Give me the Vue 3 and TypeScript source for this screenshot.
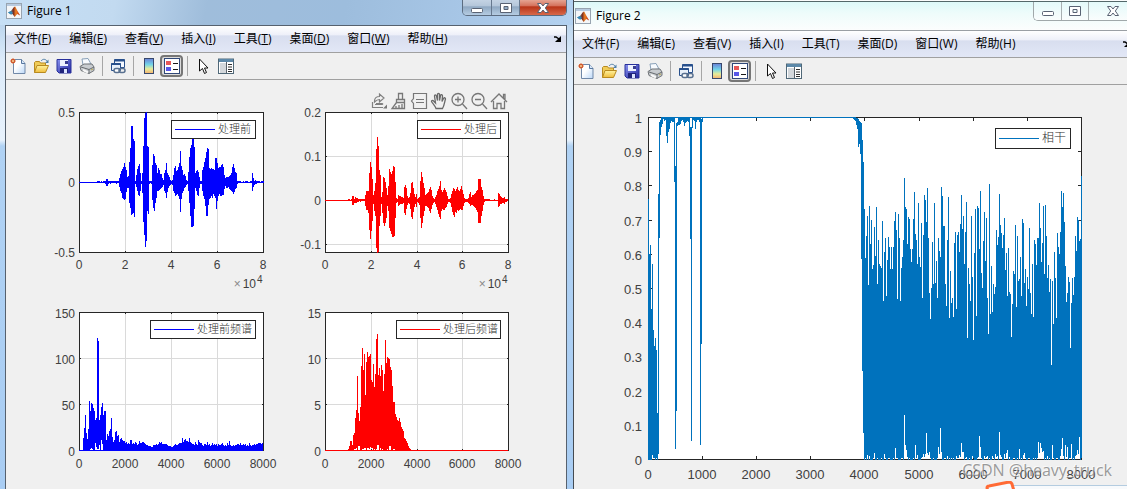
<script setup lang="ts">
interface Run { x: number; values: string }
interface Tick { at: number; label: string }
interface Axes {
  id: string
  left: number; top: number; right: number; bottom: number
  xTicks: Tick[]; yTicks: Tick[]
  grid: boolean; tickLength: number; fontSize: number
  xLabelY: number; yLabelX: number; yLabelDrop: number
  power?: boolean
  color: string
  path: string
  legend: { x: number; y: number; width: number; height: number; text: string; fontSize: number }
}
interface Figure {
  id: string; title: string; active: boolean; viewBox: string; axes: Axes[]
}

/* Signal drawn around a zero line; each value is "above/below". */
function signalPath(left: number, right: number, zero: number, runs: Run[]): string {
  let d = `M${left},${zero}H${right}V${zero + 1}H${left}z`
  for (const run of runs) {
    run.values.split(' ').forEach((pair, i) => {
      const [up, down] = pair.split('/').map(Number)
      d += `M${run.x + i},${zero - up}h1v${up + down + 1}h-1z`
    })
  }
  return d
}

/* Spectrum standing on a baseline; an optional second value is the lower edge. */
function spectrumPath(left: number, right: number, base: number, runs: Run[]): string {
  let d = `M${left},${base}H${right}V${base + 1}H${left}z`
  for (const run of runs) {
    run.values.split(' ').forEach((item, i) => {
      const [high, low = 0] = item.split('/').map(Number)
      d += `M${run.x + i},${base + 1 - high}h1v${high - low}h-1z`
    })
  }
  return d
}

const before: Run[] = [
  { x: 97, values: '1/0 1/0 1/0 0/0 1/0 0/0 1/0 1/0 1/1 3/3 3/3 1/1 1/0 1/1 1/0 1/0 1/0 1/0 1/0 1/1 1/0 1/0' },
  { x: 119, values: '4/4 8/8 11/10 13/15 15/16 19/17 15/16 12/9 5/5 6/5 20/20 34/25 56/32 56/31 43/30 41/34 1/1 7/4 13/8 16/12 18/13 9/8 1/1 9/10 36/39 64/52 69/64 70/58 36/28 35/31 1/1 1/0 1/1 17/17 28/25 26/28 19/20 17/15 9/8 14/8 12/7 8/6 8/5 4/4 2/2 9/8 12/10 19/15 9/9 7/5 5/3 2/2 1/1 2/2 7/8 14/10 16/13 11/12 12/11 15/13 19/16 31/29 16/16 12/10 7/8 8/5 6/4 2/2 1/1 10/8 25/20 34/33 37/44 43/44 43/43 35/26 9/5 11/8 12/12 10/13 5/5 1/1 1/1 12/8 15/13 20/16 24/23 30/33 34/33 33/22 14/16 13/15 14/13 13/15 13/11 12/13 24/15 24/26 19/18 14/13 15/11 15/13 17/13 18/12 15/12 7/6 4/3 5/5 5/5 5/4 6/6 7/7 9/8 15/9 18/11 14/9 10/6 9/5 1/1 1/0 1/0 1/0 0/0 0/0 1/0 0/0 1/0 1/0 1/0 0/0 0/0 1/0 1/0 9/8 4/4 1/2 2/1 1/1 1/0 1/0 1/0 0/0 1/0 1/0 1/0' },
]
const after: Run[] = [
  { x: 348, values: '1/0 1/0 0/0 1/0 4/4 4/4 1/2 3/2 2/2 2/1 1/1 1/0 1/1 1/0 1/0 1/0 1/0' },
  { x: 365, values: '5/5 9/9 9/9 9/12 27/29 38/38 33/30 21/20 5/3 9/10 17/15 51/47 63/52 54/51 30/25 25/15 3/3 8/12 23/22 22/25 18/22 12/17 5/5 14/10 31/27 28/30 26/33 29/36 34/36 33/35 18/17 2/2 1/1 5/5 4/4 4/3 3/3 3/3 2/2 13/12 15/14 12/8 4/4 2/2 3/3 7/8 17/16 18/18 12/11 6/6 3/3 6/6 1/1 2/2 3/4 19/17 28/27 23/22 17/15 12/10 5/5 6/5 7/6 8/7 11/10 13/12 10/8 4/4 2/2 1/1 3/3 5/6 9/9 11/13 14/16 19/18 10/10 8/8 10/9 12/9 10/7 8/6 4/3 1/1 1/1 2/2 6/6 9/11 12/14 11/16 9/11 11/12 13/9 10/10 9/9 11/8 14/9 10/9 6/5 2/2 1/1 1/1 1/1 2/2 6/3 8/5 3/4 5/4 5/5 6/6 7/7 9/9 10/11 21/22 21/22 21/22 13/15 10/10 4/4 1/1 1/0 1/0 1/0 1/0 1/0 0/0 0/0 0/0 0/0 1/0 0/0 0/0 0/0 7/6 6/5 4/3 3/3 2/2 2/2 3/3 1/1 1/1 1/0' },
]
const beforeSpectrum: Run[] = [
  { x: 83, values: '13 23 36 18 12 22 50 40/2 48/3 47/2 43 40 31/8 33/4 113/2 110/2 31/6 36 44/11 48/7 36 40 40 11 17 15 20 22/1 33/1 14 9 11 19 20 15 16 9 12 13 11 10 10 8 9 7 8 7 11 11 7 8 7 9 8 6 7 10 8 8 9 9 8 7 6 6 5 5 5 4 4 6 6 6 7 6 7 9 8 9 7 7 7 7 7 6 5 5 5 4 4 5 6 7 6 6 7 8 8 8 13 9 11 12 10 10 9 13 9 8 7 7 6 9 7 6 11 9 8 8 6 5 7 7 6 9 6 7 5 6 8 6 7 6 7 5 7 6 6 7 8 6 5 6 5 8 6 10 6 5 5 6 5 6 6 7 7 6 8 6 6 7 6 7 5 6 5 8 6 5 6 6 7 6 7 7 8 8 8 7 8' },
]
const afterSpectrum: Run[] = [
  { x: 348, values: '2 5 10 10 6/1 16/1 18/2 33/2 41/3 75/1 38/5 30/5 44 85/1 103/2 81/2 97/3 56/3 89/1 99/3 94/3 95/2 97/4 71/3 69/3 87 64/2 77/1 112/2 117/6 76/6 83 75/3 86 81/2 60/1 77/1 111/1 88 94/2 93/1 92/5 84/5 81/1 65 49/2 49/2 37/1 34/1 31/1 30/1 33/1 29 24/1 22 20 13 12 10 8 5 3 2' },
]

/* Coherence samples, in steps of a 0 to 1026 scale measured from the top. */
const FULL = 1026
const coherenceHead: [number, number, number][] = [
  [0, 246, 1026], [1, 411, 1026], [2, 384, 1026], [3, 576, 1026], [4, 441, 1010], [5, 639, 1020], [6, 687, 1020],
  [7, 663, 1026], [8, 699, 1020], [9, 888, 1026], [10, 231, 1007], [11, 14, 359], [12, 9, 50], [13, 3, 26], [14, 1, 18],
  [15, 0, 3], [16, 0, 9], [17, 0, 6], [18, 1, 54], [19, 4, 74], [20, 4, 42], [21, 3, 32], [22, 3, 16], [23, 0, 10],
  [24, 0, 12], [25, 2, 12], [26, 2, 191], [27, 147, 992], [28, 18, 878], [29, 16, 24], [30, 1, 20], [31, 1, 21],
  [32, 3, 19], [33, 0, 8], [34, 0, 6], [35, 0, 12], [36, 2, 23], [37, 3, 14], [38, 0, 12], [39, 0, 8], [40, 2, 12],
  [41, 1, 54], [42, 30, 362], [43, 30, 968], [44, 1, 30], [45, 0, 7], [46, 0, 10], [47, 0, 32], [48, 2, 12],
  [49, 0, 6], [50, 0, 5], [51, 3, 12], [52, 3, 980], [53, 6, 678], [54, 3, 12],
  [205, 0, 4], [206, 0, 7], [207, 1, 10], [208, 2, 20], [209, 4, 32], [210, 6, 86], [211, 12, 79], [212, 16, 107],
  [213, 18, 422], [214, 69, 759], [215, 134, 944],
]
const coherenceTops = '276 424 357 297 504 267 381 309 455 444 330 417 270 501 369 441 447 453 312 552 405 363 537 429 360 390 455 390 455 390 312 285 339 546 291 363 552 453 420 369 183 270 276 381 300 306 396 435 396 306 225 351 369 441 258 420 450 318 543 354 234 249 315 213 363 528 606 513 375 501 258 498 432 543 363 402 420 210 237 327 327 501 567 369 240 603 462 558 543 600 378 345 576 354 345 405 321 234 336 297 441 345 255 663 453 501 552 297 480 669 408 276 597 267 273 396 222 468 513 372 285 432 303 543 651 201 591 447 585 501 531 510 339 384 360 231 324 348 393 354 303 459 408 537 393 525 531 660 561 462 471 324 570 357 492 486 420 537 306 318 498 456 567 480 516 333 528 591 441 600 369 381 444 363 363 258 333 435 378 267 471 264 357 483 444 525 486 744 492 621 405 483 603 348 390 411 345 222 270 228 315 447 555 528 480 495 693 558 483 534 480 357 402 300 309 372 366 177'.split(' ').map(Number)
const coherenceGaps: Record<number, number> = {
  3: 15, 5: 12, 10: 21, 20: 18, 31: 36, 32: 7, 40: 135, 41: 45, 42: 30, 43: 10, 51: 45, 53: 15, 57: 6, 58: 10, 59: 19, 60: 8, 61: 18,
  62: 81, 63: 21, 64: 14, 65: 24, 74: 39, 75: 18, 76: 96, 77: 24, 83: 12, 92: 12, 95: 15, 96: 10, 97: 51, 98: 24, 99: 24, 102: 9,
  108: 12, 114: 10, 115: 72, 116: 39, 120: 12, 122: 10, 123: 12, 128: 12, 131: 18, 132: 10, 133: 12, 135: 84, 136: 15, 137: 8,
  140: 18, 142: 21, 143: 30, 145: 8, 155: 33, 159: 15, 160: 21, 174: 54, 175: 22, 176: 51, 177: 36, 178: 24, 179: 27, 183: 12,
  188: 45, 196: 12, 197: 32, 198: 66, 199: 12, 201: 45, 202: 8, 203: 39, 207: 48, 211: 12, 212: 14, 213: 30, 214: 18, 215: 69,
}

function coherencePath(left: number, top: number, height: number): string {
  const y = (v: number) => top + Math.round((v / FULL) * height)
  let d = `M${left + 13},${top}h194v1h-194z`
  for (const [i, high, low] of coherenceHead) {
    d += `M${left + i},${y(high)}h1V${y(low) + 1}h-1z`
  }
  coherenceTops.forEach((high, i) => {
    const gap = coherenceGaps[i] ?? (i % 4 === 1 || i % 7 === 3 ? 6 : 0)
    d += `M${left + 216 + i},${y(high)}h1V${y(FULL - gap) + 1}h-1z`
  })
  return d
}

const ticks = (start: number, step: number, labels: string): Tick[] =>
  labels.split(' ').map((label, i) => ({ at: Math.round(start + step * i), label }))

const figures: Figure[] = [
  {
    id: 'figure-1', title: 'Figure 1', active: true, viewBox: '6 80 560 409',
    axes: [
      {
        id: 'before', left: 79, top: 112, right: 263, bottom: 252, grid: true, tickLength: 2, fontSize: 12,
        xTicks: ticks(79, 46, '0 2 4 6 8'), yTicks: ticks(252, -70, '-0.5 0 0.5'),
        xLabelY: 269, yLabelX: 75, yLabelDrop: 5, power: true, color: '#0000ff', path: signalPath(79, 263, 182, before),
        legend: { x: 171, y: 120, width: 84, height: 18, text: '处理前', fontSize: 11 },
      },
      {
        id: 'after', left: 325, top: 112, right: 508, bottom: 252, grid: true, tickLength: 2, fontSize: 12,
        xTicks: ticks(325, 45.8, '0 2 4 6 8'), yTicks: ticks(244, -44, '-0.1 0 0.1 0.2'),
        xLabelY: 269, yLabelX: 321, yLabelDrop: 5, power: true, color: '#ff0000', path: signalPath(325, 508, 200, after),
        legend: { x: 417, y: 120, width: 83, height: 18, text: '处理后', fontSize: 11 },
      },
      {
        id: 'before-spectrum', left: 79, top: 312, right: 263, bottom: 450, grid: true, tickLength: 2, fontSize: 12,
        xTicks: ticks(79, 46, '0 2000 4000 6000 8000'), yTicks: ticks(450, -46, '0 50 100 150'),
        xLabelY: 468, yLabelX: 75, yLabelDrop: 6, color: '#0000ff', path: spectrumPath(79, 263, 450, beforeSpectrum),
        legend: { x: 150, y: 320, width: 105, height: 18, text: '处理前频谱', fontSize: 11 },
      },
      {
        id: 'after-spectrum', left: 325, top: 312, right: 508, bottom: 450, grid: true, tickLength: 2, fontSize: 12,
        xTicks: ticks(325, 45.8, '0 2000 4000 6000 8000'), yTicks: ticks(450, -46, '0 5 10 15'),
        xLabelY: 468, yLabelX: 321, yLabelDrop: 6, color: '#ff0000', path: spectrumPath(325, 508, 450, afterSpectrum),
        legend: { x: 396, y: 320, width: 104, height: 18, text: '处理后频谱', fontSize: 11 },
      },
    ],
  },
  {
    id: 'figure-2', title: 'Figure 2', active: false, viewBox: '574 85 553 404',
    axes: [
      {
        id: 'coherence', left: 648, top: 117, right: 1081, bottom: 459, grid: false, tickLength: 4, fontSize: 13,
        xTicks: ticks(648, 54.1, '0 1000 2000 3000 4000 5000 6000 7000 8000'),
        yTicks: ticks(459, -34.2, '0 0.1 0.2 0.3 0.4 0.5 0.6 0.7 0.8 0.9 1'),
        xLabelY: 479, yLabelX: 642, yLabelDrop: 6, color: '#0072bd', path: coherencePath(648, 117, 342),
        legend: { x: 995, y: 128, width: 75, height: 20, text: '相干', fontSize: 12 },
      },
    ],
  },
]

const menus = [
  { name: '文件', key: 'F' }, { name: '编辑', key: 'E' }, { name: '查看', key: 'V' }, { name: '插入', key: 'I' },
  { name: '工具', key: 'T' }, { name: '桌面', key: 'D' }, { name: '窗口', key: 'W' }, { name: '帮助', key: 'H' },
]
const toolGroups = [
  [{ icon: 'new', label: '新建' }, { icon: 'open', label: '打开' }, { icon: 'save', label: '保存' }, { icon: 'print', label: '打印' }],
  [{ icon: 'link', label: '链接绘图' }],
  [{ icon: 'colorbar', label: '插入颜色栏' }, { icon: 'legend', label: '插入图例' }],
  [{ icon: 'pointer', label: '编辑绘图' }, { icon: 'inspector', label: '属性检查器' }],
]
const axesTools = [
  { icon: 'export', label: '导出' }, { icon: 'brush', label: '刷亮' }, { icon: 'tips', label: '数据提示' },
  { icon: 'pan', label: '平移' }, { icon: 'zoom-in', label: '放大' }, { icon: 'zoom-out', label: '缩小' },
  { icon: 'home', label: '还原视图' },
]
</script>

<template>
  <main class="desktop">
    <svg class="sprites" aria-hidden="true">
      <defs>
        <linearGradient id="g-paper" x1="0" y1="0" x2="1" y2="1"><stop offset=".4" stop-color="#fff" /><stop offset="1" stop-color="#bcd8f8" /></linearGradient>
        <linearGradient id="g-folder" x1="0" y1="0" x2="0" y2="1"><stop offset="0" stop-color="#fff3a0" /><stop offset="1" stop-color="#f0bd3c" /></linearGradient>
        <linearGradient id="g-disk" x1="0" y1="0" x2="1" y2="1"><stop offset="0" stop-color="#8a94f0" /><stop offset="1" stop-color="#2226a0" /></linearGradient>
        <linearGradient id="g-bar" x1="0" y1="0" x2="0" y2="1"><stop offset="0" stop-color="#6a80d8" /><stop offset=".4" stop-color="#72d4e8" /><stop offset=".7" stop-color="#e8ec98" /><stop offset="1" stop-color="#f5b070" /></linearGradient>
        <linearGradient id="g-logo" x1="0" y1="0" x2="1" y2="0"><stop offset="0" stop-color="#37a5c8" /><stop offset=".45" stop-color="#803020" /><stop offset=".65" stop-color="#f08020" /><stop offset="1" stop-color="#b02010" /></linearGradient>
      </defs>
      <symbol id="i-matlab" viewBox="0 0 16 16">
        <rect x=".5" y=".5" width="15" height="15" fill="#f4f6f8" stroke="#98a4b0" /><path d="M1 2h14" stroke="#b8cbe0" stroke-width="2" />
        <path d="M2 9.500 5 8l3-4 1.200-.5 2 4 3 5-3-1.500-2.500 3L6.500 11 5 11.500z" fill="url(#g-logo)" />
        <path d="M2 9.500 5 8l2 2-2 1.500z" fill="#3488b8" />
      </symbol>
      <symbol id="i-new" viewBox="0 0 16 16">
        <path d="M3.500 1.500h8l3.500 4v10H3.500z" fill="url(#g-paper)" stroke="#7088a8" /><path d="M11.500 1.500v4H15" fill="#d8e8fa" stroke="#5878a0" />
        <path d="M3 0v6M0 3h6M1 1l4 4M5 1 1 5" stroke="#e07040" /><circle cx="3" cy="3" r="1.500" fill="#ffe0a0" stroke="#c84820" />
      </symbol>
      <symbol id="i-open" viewBox="0 0 16 16">
        <path d="M1.500 14.500V4.500l1-1h4l1 1.500h5v3" fill="#f0cc58" stroke="#b88a20" /><path d="M1.500 14.500 4 7.500h11.500l-3 7z" fill="url(#g-folder)" stroke="#b88a20" />
        <path d="M8 3c2-2.500 4.500-2 6 0" fill="none" stroke="#5080a8" /><path d="M15.500 1.500v3.500H12z" fill="#5080a8" />
      </symbol>
      <symbol id="i-save" viewBox="0 0 16 16">
        <path d="M1 1.500h14V15H3l-2-2z" fill="url(#g-disk)" stroke="#28309a" /><path d="M4 2h8v6H4z" fill="#eef2ff" /><path d="M9 3h3v3H9z" fill="#383c90" />
        <path d="M4 10h8v5H4z" fill="#20247c" /><path d="M8 11h3v4H8z" fill="#dce4ff" />
      </symbol>
      <symbol id="i-print" viewBox="0 0 16 16">
        <path d="m4 7-1-6 6-.5L12 6z" fill="#f8fbff" stroke="#88a0b8" /><path d="M1 8.500 5 6l8 0 2 3v3.500l-5 3-8-3z" fill="#c8ccd0" stroke="#707478" />
        <path d="m2 9 8 2.500 5-2.500M10 11.500v4" fill="none" stroke="#686c70" /><path d="m4 12 5 2.500" stroke="#f8f8f8" stroke-width="2" /><path d="m12 12 2-1" stroke="#b8a850" />
      </symbol>
      <symbol id="i-link" viewBox="0 0 16 16">
        <path d="M4.500 1.500h10v8h-10z" fill="#f4f8ff" stroke="#28508c" /><path d="M4.500 2.500h10" stroke="#28508c" stroke-width="2" />
        <path d="M1.500 5.500h9v7h-9z" fill="#e8f0fa" stroke="#28508c" /><path d="M1.500 6h9" stroke="#28508c" stroke-width="2" />
        <rect x="4" y="10.500" width="6" height="4" rx="2" fill="#fff" stroke="#587090" stroke-width="1.500" /><rect x="9" y="10.500" width="6" height="4" rx="2" fill="none" stroke="#587090" stroke-width="1.500" />
      </symbol>
      <symbol id="i-colorbar" viewBox="0 0 16 16"><rect x="3.500" y=".5" width="9" height="15" fill="url(#g-bar)" stroke="#38486c" /></symbol>
      <symbol id="i-legend" viewBox="0 0 16 16">
        <rect x=".5" y=".5" width="15" height="15" fill="#fff" stroke="#304878" /><path d="M2 3h5v4H2z" fill="#e85858" /><path d="M2 9h5v4H2z" fill="#5858e8" /><path d="M9 5.500h5M9 11.500h5" stroke="#181818" />
      </symbol>
      <symbol id="i-pointer" viewBox="0 0 16 16"><path d="M4.500 1v12l3-2.500 2 5 2-1-2-4.500h3.500z" fill="#fff" stroke="#101010" /></symbol>
      <symbol id="i-inspector" viewBox="0 0 16 16">
        <rect x=".5" y="1" width="15" height="14.500" fill="#fff" stroke="#506878" /><path d="M1 2.500h14" stroke="#5c88a8" stroke-width="3" /><path d="M2 5h6v10H2z" fill="#d4d8dc" /><path d="M8.500 4v11" stroke="#586068" /><path d="M10 6.500h4M10 9h4M10 11.500h4M10 13.500h4" stroke="#303030" />
      </symbol>
      <symbol id="i-export" viewBox="0 0 18 18"><path d="M2.500 10v5.500H13M5 12.500h7c1 0 1-1 0-1H6M4.500 9c0-3 2-4.500 5-4.500V2l4.500 4-4.500 4V7.500c-2 0-3 .5-5 2.500z" fill="none" stroke="#808080" stroke-width="1.200" /><path d="M13 16.500h4v-4z" fill="#777" /></symbol>
      <symbol id="i-brush" viewBox="0 0 18 18"><path d="M8.500 1.500h4v6h-4zM6.500 7.500h8v3h-8zM6.500 10.500 2 16.500h12.500v-6M6 14v2.500M9 13v3.500M12 12v4.500" fill="none" stroke="#787878" stroke-width="1.300" /></symbol>
      <symbol id="i-tips" viewBox="0 0 18 18"><path d="M3.500 1.500h13v15h-13v-5L1.500 9l2-2.500zM6 7.500h8M6 10.500h8" fill="none" stroke="#777" stroke-width="1.200" /></symbol>
      <symbol id="i-pan" viewBox="0 0 18 18"><path d="M6 16.500c-1-3-3.500-5-4.500-7 0-1.500 1.500-1.500 2.500 0l1.500 1.500-1-7c0-1.500 1.500-1.500 2 0l1 4.500V2.500c0-1.500 2-1.500 2 0v6l1-5c.5-1.500 2-1 2 .5l-.5 5.500 1.500-3c1-1.500 2-.5 2 .5-1 3-1 6-3 9.500z" fill="none" stroke="#686868" stroke-width="1.300" /></symbol>
      <symbol id="i-zoom-in" viewBox="0 0 18 18"><circle cx="8" cy="7.500" r="6" fill="none" stroke="#777" stroke-width="1.300" /><path d="m12.500 12 4.500 5M5 7.500h6M8 4.500v6" stroke="#777" stroke-width="1.300" /></symbol>
      <symbol id="i-zoom-out" viewBox="0 0 18 18"><circle cx="8" cy="7.500" r="6" fill="none" stroke="#777" stroke-width="1.300" /><path d="m12.500 12 4.500 5M5 7.500h6" stroke="#777" stroke-width="1.300" /></symbol>
      <symbol id="i-home" viewBox="0 0 18 18"><path d="m1 10 8-8 8 8M13.500 6V2.500h1.500V8M3.500 9v7.500H7v-5h4v5h3.500V9" fill="none" stroke="#777" stroke-width="1.300" /></symbol>
    </svg>

    <section v-for="fig in figures" :key="fig.id" class="window" :class="fig.active ? 'window--front' : 'window--back'" :aria-label="fig.title">
      <header class="titlebar">
        <svg class="titlebar__icon" aria-hidden="true"><use href="#i-matlab" /></svg>
        <h1 class="titlebar__text">{{ fig.title }}</h1>
        <div class="captions">
          <button class="caption" type="button" aria-label="最小化">
            <svg width="14" height="12" viewBox="0 0 14 12"><rect x="1.500" y="6.500" width="11" height="4" rx="1" fill="#fff" stroke="#596273" /></svg>
          </button>
          <button class="caption" type="button" aria-label="最大化">
            <svg width="14" height="12" viewBox="0 0 14 12"><path d="M1.500 1.500h11v9h-11zM5 4.500v3h4v-3z" fill="#fff" fill-rule="evenodd" stroke="#596273" /></svg>
          </button>
          <button class="caption caption--close" type="button" aria-label="关闭">
            <svg width="14" height="12" viewBox="0 0 14 12"><path d="M1.500 1.500h3.500l2 2.500 2-2.500h3.500L9.300 6l3.200 4.500H9L7 8l-2 2.500H1.500L4.700 6z" fill="#fff" stroke="#596273" /></svg>
          </button>
        </div>
      </header>

      <div class="client">
        <nav class="menubar" aria-label="菜单">
          <button v-for="menu in menus" :key="menu.key" class="menu" type="button">{{ menu.name }}(<span class="menu__key">{{ menu.key }}</span>)</button>
          <button class="menubar__dock" type="button" aria-label="停靠">
            <svg width="8" height="6" viewBox="0 0 8 6"><path d="M0 1h2l3 2" fill="none" stroke="#000" stroke-width="1.500" /><path d="M7 0v6H1z" fill="#000" /></svg>
          </button>
        </nav>
        <div class="toolbar" role="toolbar" aria-label="图窗工具栏">
          <div v-for="(group, g) in toolGroups" :key="g" class="toolbar__group">
            <button v-for="tool in group" :key="tool.icon" class="tool" :class="{ 'tool--pressed': tool.icon === 'legend' }" type="button" :aria-label="tool.label">
              <svg class="tool__icon" aria-hidden="true"><use :href="`#i-${tool.icon}`" /></svg>
            </button>
          </div>
        </div>

        <div class="canvas">
          <svg class="plot" :viewBox="fig.viewBox" role="img" :aria-label="fig.title">
            <g v-for="ax in fig.axes" :key="ax.id">
              <g shape-rendering="crispEdges">
                <rect :x="ax.left" :y="ax.top" :width="ax.right - ax.left + 1" :height="ax.bottom - ax.top + 1" fill="#fff" />
                <template v-if="ax.grid">
                  <rect v-for="t in ax.xTicks.slice(1, -1)" :key="`gx${t.label}`" :x="t.at" :y="ax.top" width="1" :height="ax.bottom - ax.top" fill="#dadada" />
                  <rect v-for="t in ax.yTicks" :key="`gy${t.label}`" :x="ax.left" :y="t.at" :width="ax.right - ax.left" height="1" fill="#dadada" />
                </template>
                <g fill="#262626">
                  <template v-for="t in ax.xTicks" :key="`tx${t.label}`">
                    <rect :x="t.at" :y="ax.top" width="1" :height="ax.tickLength" />
                    <rect :x="t.at" :y="ax.bottom - ax.tickLength + 1" width="1" :height="ax.tickLength" />
                  </template>
                  <template v-for="t in ax.yTicks" :key="`ty${t.label}`">
                    <rect :x="ax.left" :y="t.at" :width="ax.tickLength" height="1" />
                    <rect :x="ax.right - ax.tickLength + 1" :y="t.at" :width="ax.tickLength" height="1" />
                  </template>
                  <rect :x="ax.left" :y="ax.top" :width="ax.right - ax.left + 1" height="1" />
                  <rect :x="ax.left" :y="ax.bottom" :width="ax.right - ax.left + 1" height="1" />
                  <rect :x="ax.left" :y="ax.top" width="1" :height="ax.bottom - ax.top" />
                  <rect :x="ax.right" :y="ax.top" width="1" :height="ax.bottom - ax.top" />
                </g>
                <path :d="ax.path" :fill="ax.color" />
                <rect :x="ax.legend.x" :y="ax.legend.y" :width="ax.legend.width + 1" :height="ax.legend.height + 1" fill="#262626" />
                <rect :x="ax.legend.x + 1" :y="ax.legend.y + 1" :width="ax.legend.width - 1" :height="ax.legend.height - 1" fill="#fff" />
                <rect :x="ax.legend.x + 4" :y="ax.legend.y + ax.legend.height / 2" width="40" height="1" :fill="ax.color" />
              </g>
              <text class="legend-text" :x="ax.legend.x + 47" :y="ax.legend.y + ax.legend.height / 2 + 4" :font-size="ax.legend.fontSize">{{ ax.legend.text }}</text>
              <g class="ticks" :font-size="ax.fontSize">
                <text v-for="t in ax.xTicks" :key="`x${t.label}`" :x="t.at" :y="ax.xLabelY" text-anchor="middle">{{ t.label }}</text>
                <text v-for="t in ax.yTicks" :key="`y${t.label}`" :x="ax.yLabelX" :y="t.at + ax.yLabelDrop" text-anchor="end">{{ t.label }}</text>
                <text v-if="ax.power" :x="ax.right - 7" :y="288" text-anchor="end"><tspan fill="#888">×</tspan><tspan dx="2">10</tspan></text>
                <text v-if="ax.power" :x="ax.right - 6" :y="283" font-size="10">4</text>
              </g>
            </g>
          </svg>
          <div v-if="fig.active" class="axes-tools" role="toolbar" aria-label="坐标区工具栏">
            <button v-for="tool in axesTools" :key="tool.icon" class="axes-tool" type="button" :aria-label="tool.label">
              <svg class="axes-tool__icon" aria-hidden="true"><use :href="`#i-${tool.icon}`" /></svg>
            </button>
          </div>
        </div>
      </div>
    </section>

    <svg class="strip" width="142" height="10" viewBox="0 0 142 10" aria-hidden="true">
      <path d="M20 5h122v5H20z" fill="#f8fafc" /><path d="M26 4h116v1H26z" fill="#b4cce0" />
      <path d="M3 10 2 7q0-2 2-2l20-4q2 0 3 2l2 7" fill="#f8fafc" stroke="#ff6a35" stroke-width="3" />
    </svg>
    <p class="watermark">CSDN @heavy_truck</p>
  </main>
</template>

<style>
body {
  margin: 0;
}
</style>

<style scoped>
.desktop {
  position: relative;
  display: grid;
  grid-template-columns: 573fr 554fr;
  min-height: 100vh;
  overflow: hidden;
  background: #e4e8ec;
  font-family: "Open Sans", "Noto Sans CJK SC", sans-serif;
  font-size: 12px;
  color: #000;
}
.sprites {
  position: absolute;
  width: 0;
  height: 0;
}
button {
  margin: 0;
  padding: 0;
  border: 0;
  background: none;
  font: inherit;
  color: inherit;
}
.window {
  display: flex;
  flex-direction: column;
  box-sizing: border-box;
  min-width: 0;
}
.window--front {
  padding: 0 6px 0 5px;
  background: linear-gradient(#a4c3e2 0, #bdd6ee 25px, #dcebfa 60px, #e8f2fc 140px, #b0d2f4 146px, #a9cdf3 100%);
}
.window--back {
  border-left: 1px solid #454b52;
  background: #fbfdfd;
}
.titlebar {
  display: flex;
  align-items: center;
  gap: 5px;
}
.window--front .titlebar {
  height: 25px;
  padding-left: 1px;
  margin: 0 -6px 0 -5px;
  padding-left: 6px;
  background: linear-gradient(100deg, #c6dff5 0, #c2daf0 20%, #9fbddb 36%, #9dbddd 60%, #a9c8e8 85%, #b4d2f0 100%);
}
.window--back .titlebar {
  height: 28px;
  padding-left: 1px;
  margin-top: 1px;
  border-top: 1px solid #54686a;
  background: linear-gradient(#ddf9f9, #eefcfb 40%, #fcfdfd);
}
.titlebar__icon {
  width: 16px;
  height: 16px;
}
.window--front .titlebar__icon,
.window--front .titlebar__text {
  margin-bottom: 4px;
}
.titlebar__text {
  flex: 1;
  margin-top: 0;
  margin-bottom: 0;
  font-size: 12px;
  font-weight: 400;
  line-height: 16px;
}
.captions {
  display: flex;
  align-self: flex-start;
  box-sizing: border-box;
  height: 16px;
  border: 1px solid #5c6c80;
  border-top: 0;
  border-radius: 0 0 5px 5px;
  overflow: hidden;
}
.caption {
  display: flex;
  align-items: center;
  justify-content: center;
  width: 28px;
  background: linear-gradient(#c4d3e4 0, #b4c6da 40%, #8fa8c2 45%, #b5cce2 100%);
}
.caption + .caption {
  border-left: 1px solid #66788e;
}
.caption--close {
  width: 47px;
  background: linear-gradient(#e5a492 0, #d4705a 40%, #b83418 45%, #d8694a 100%);
}
.window--back .captions {
  height: 19px;
  border-color: #a0a8aa;
  border-right: 0;
  border-radius: 0 0 0 5px;
}
.window--front .captions {
  margin-right: 6px;
}
.window--back .caption {
  width: 27px;
  background: linear-gradient(#e4fafa, #fafdfd);
}
.window--back .caption + .caption {
  border-color: #a8b0b2;
}
.window--back .caption--close {
  width: 39px;
  padding-left: 9px;
}
.client {
  display: flex;
  flex: 1;
  flex-direction: column;
  border-top: 1px solid #56616e;
  background: #f0f0f0;
}
.window--front .client {
  border-left: 1px solid #56616e;
  border-right: 1px solid #56616e;
}
.window--back .client {
  border-top-color: #9a9fa4;
}
.menubar {
  display: flex;
  gap: 18px;
  height: 26px;
  padding-left: 8px;
  border-bottom: 1px solid #a0a0a0;
  background: linear-gradient(#fff 0, #eef0f9 34%, #d8deef 38%, #e2e7f6 100%);
}
.menu {
  line-height: 26px;
  white-space: nowrap;
}
.window--front .menu__key {
  text-decoration: underline;
}
.menubar__dock {
  display: flex;
  align-items: center;
  margin-left: auto;
  padding-right: 4px;
}
.window--back .menubar__dock {
  margin-right: -8px;
}
.toolbar {
  display: flex;
  height: 26px;
  border-bottom: 1px solid #a0a0a0;
  background: #f0f0f0;
}
.toolbar__group {
  display: flex;
  align-items: center;
}
.toolbar__group + .toolbar__group::before {
  content: "";
  width: 1px;
  height: 20px;
  margin: 0 3px 0 4px;
  background: #a6a6a6;
}
.tool {
  display: flex;
  align-items: center;
  justify-content: center;
  box-sizing: border-box;
  width: 23px;
  height: 22px;
}
.tool--pressed {
  border: 2px solid #767676;
  border-radius: 4px;
  background: #dcdcdc;
}
.tool__icon {
  flex: none;
  width: 16px;
  height: 16px;
}
.canvas {
  position: relative;
  flex: 1;
}
.plot {
  display: block;
  width: 100%;
  height: auto;
}
.ticks {
  font-family: "Liberation Sans", sans-serif;
  fill: #404040;
}
.legend-text {
  font-family: "Noto Sans CJK SC", sans-serif;
  font-weight: 300;
  fill: #303030;
}
.axes-tools {
  position: absolute;
  top: 12px;
  right: 57px;
  display: flex;
}
.axes-tool {
  display: flex;
  justify-content: center;
  width: 20px;
}
.axes-tool__icon {
  width: 18px;
  height: 18px;
}
.strip {
  position: absolute;
  right: 0;
  bottom: -2px;
}
.watermark {
  position: absolute;
  right: 15px;
  bottom: 8px;
  margin: 0;
  font-family: "Open Sans", sans-serif;
  font-size: 16px;
  line-height: 22px;
  color: rgba(130, 130, 130, 0.8);
  text-shadow: -1px -1px 0 rgba(255, 255, 255, 0.7);
}
</style>
